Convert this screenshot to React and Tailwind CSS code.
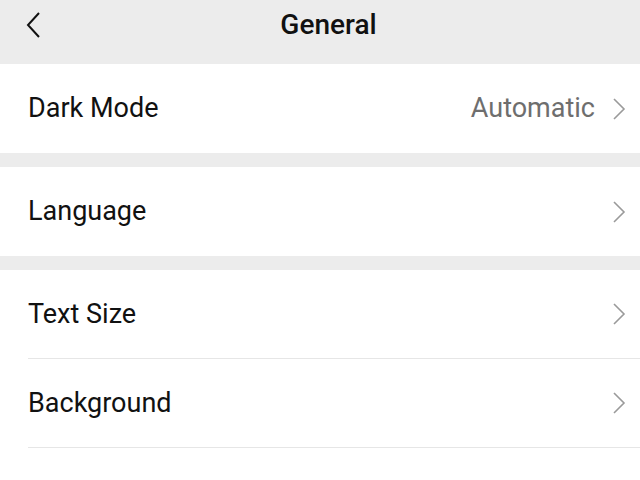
const Chevron = () => (
	<svg width="14" height="24" viewBox="0 0 14 24" fill="none" className="shrink-0">
		<path d="M2 2 L12 12 L2 22" stroke="#9a9a9a" strokeWidth="1.6" />
	</svg>
)

const Row = ({ label, value, divider }) => (
	<div className="bg-white pl-[28px]">
		<div className={`flex items-center h-[89px] pr-[14px] ${divider ? 'border-b border-[#e6e6e6]' : ''}`}>
			<span className="flex-1 text-[27px] text-[#111]">{label}</span>
			{value && <span className="text-[27px] text-[#6e6e6e] mr-[17px]">{value}</span>}
			<Chevron />
		</div>
	</div>
)

const App = () => {
	return (
		<div className="w-[640px] h-[480px] overflow-hidden bg-white" style={{ fontFamily: 'Roboto, "Liberation Sans", sans-serif' }}>
			{/* Header */}
			<div className="relative h-[64px] bg-[#ececec] flex justify-center">
				<svg width="18" height="30" viewBox="0 0 18 30" fill="none" className="absolute left-[24px] top-[11px]">
					<path d="M15 2 L4 14 L15 26" stroke="#111" strokeWidth="2" />
				</svg>
				<span className="text-[28px] leading-[50px] font-medium text-[#111] ml-[17px]">General</span>
			</div>

			<Row label="Dark Mode" value="Automatic" />
			<div className="h-[14px] bg-[#ececec]" />
			<Row label="Language" />
			<div className="h-[14px] bg-[#ececec]" />
			<Row label="Text Size" divider />
			<Row label="Background" divider />
		</div>
	)
}

export default App
